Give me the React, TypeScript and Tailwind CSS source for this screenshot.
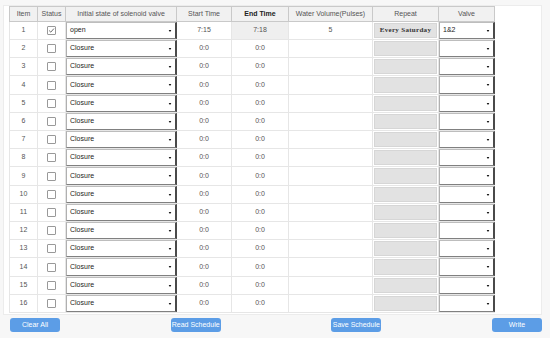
import React from 'react';

type Row = {
    item: number;
    checked: boolean;
    state: string;
    start: string;
    end: string;
    volume: string;
    repeat: string;
    valve: string;
};

const rows: Row[] = Array.from({ length: 16 }, (_, i) =>
    i === 0
        ? { item: 1, checked: true, state: 'open', start: '7:15', end: '7:18', volume: '5', repeat: 'Every Saturday', valve: '1&2' }
        : { item: i + 1, checked: false, state: 'Closure', start: '0:0', end: '0:0', volume: '', repeat: '', valve: '' }
);

const headers = ['Item', 'Status', 'Initial state of solenoid valve', 'Start Time', 'End Time', 'Water Volume(Pulses)', 'Repeat', 'Valve'];

// old-school select box with the dark bottom/right edge
const FakeSelect = ({ value }: { value: string }) => (
    <div className="relative flex h-full w-full items-center border-t border-l border-t-[#bdbdbd] border-l-[#b0b0b0] border-r-2 border-r-[#4a4a4a] border-b border-b-[#808080] bg-white pl-[3px] text-[7px] text-[#222]">
        {value}
        <svg viewBox="0 0 4 3" className="absolute right-[3px] top-1/2 h-[2px] w-[4px] -translate-y-1/2 fill-[#111]">
            <path d="M0 0 H4 L2 3 Z" />
        </svg>
    </div>
);

const Checkbox = ({ checked }: { checked: boolean }) => (
    <div className="flex h-[9px] w-[9px] items-center justify-center rounded-[1px] border border-[#999] bg-white">
        {checked && (
            <svg viewBox="0 0 8 8" className="h-[7px] w-[7px]" fill="none" stroke="#666" strokeWidth="1.1">
                <path d="M1.3 4 L3.2 5.9 L6.8 1.8" />
            </svg>
        )}
    </div>
);

const cell = 'flex items-center justify-center border-r border-b border-[#e6e6e6] text-[7px] text-[#555]';

const App = () => {
    return (
        <div className="h-[338px] w-[550px] overflow-hidden bg-[#f7f7f7] pt-[5px] pl-[3px]" style={{ fontFamily: '"Liberation Sans", Arial, sans-serif' }}>
            <div className="w-[539px] border border-[#ececec] bg-white pl-[5px] pb-[1px]">
                {/* Schedule table */}
                <div className="grid w-[486px] grid-cols-[29px_28px_111px_55px_57px_84px_66px_56px]">
                    {headers.map((h, i) => (
                        <div
                            key={h}
                            className={`flex h-[16px] items-center justify-center border-t border-r border-b border-[#c9c9c9] bg-[#f1f1f1] text-[7px] ${i === 0 ? 'border-l' : ''} ${h === 'End Time' ? 'font-bold text-[#222]' : 'text-[#555]'}`}
                        >
                            {h}
                        </div>
                    ))}

                    {rows.map((r) => (
                        <React.Fragment key={r.item}>
                            <div className={`${cell} border-l ${r.item % 5 === 4 ? 'h-[19px]' : 'h-[18px]'}`}>{r.item}</div>
                            <div className={cell}>
                                <Checkbox checked={r.checked} />
                            </div>
                            <div className="border-b border-[#e6e6e6]">
                                <FakeSelect value={r.state} />
                            </div>
                            <div className={cell}>{r.start}</div>
                            <div className={`${cell} ${r.item === 1 ? 'bg-[#efefef]' : ''}`}>{r.end}</div>
                            <div className={cell}>{r.volume}</div>
                            <div className="flex border-r border-b border-[#e6e6e6] p-[1px]">
                                <div
                                    className="flex flex-1 items-center justify-center border border-[#d6d6d6] bg-[#e2e2e2] text-[7px] font-bold tracking-[0.3px] text-[#333]"
                                    style={{ fontFamily: '"Liberation Serif", "Times New Roman", serif' }}
                                >
                                    {r.repeat}
                                </div>
                            </div>
                            <div className="border-b border-[#e6e6e6]">
                                <FakeSelect value={r.valve} />
                            </div>
                        </React.Fragment>
                    ))}
                </div>
            </div>

            {/* Action buttons */}
            <div className="mt-[3px] flex w-[539px] justify-between pl-[7px]">
                {['Clear All', 'Read Schedule', 'Save Schedule', 'Write'].map((b) => (
                    <button
                        key={b}
                        className="flex h-[14px] w-[50px] items-center justify-center rounded-[3px] bg-[#5c9de6] text-[7px] whitespace-nowrap text-white"
                    >
                        {b}
                    </button>
                ))}
            </div>
        </div>
    );
};

export default App;
